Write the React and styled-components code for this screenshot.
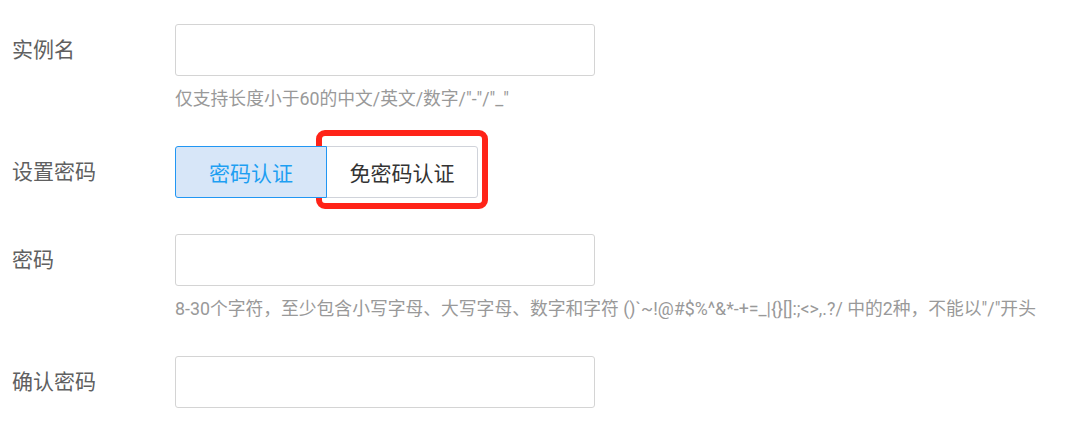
import React, { useState } from 'react'
import styled, { createGlobalStyle } from 'styled-components'

const GlobalStyle = createGlobalStyle`
  body {
    margin: 0;
    background: #fff;
    font-family: Roboto, 'Noto Sans CJK SC', sans-serif;
  }
`

const Form = styled.div`
  padding: 24px 0 0 12px;
  display: flex;
  flex-direction: column;
  gap: 36px;
`

const Item = styled.div`
  display: flex;
  align-items: flex-start;
`

const Label = styled.div`
  width: 163px;
  flex-shrink: 0;
  line-height: 52px;
  font-size: 21px;
  color: #606060;
`

const Control = styled.div`
  display: flex;
  flex-direction: column;
`

const Input = styled.input`
  box-sizing: border-box;
  width: 420px;
  height: 52px;
  border: 1px solid #d4d4d4;
  border-radius: 3px;
  outline: none;
  padding: 0 12px;
  font-size: 16px;
`

const Hint = styled.div`
  margin-top: 12px;
  line-height: 22px;
  font-size: 17.8px;
  color: #999;
  white-space: nowrap;
`

const Group = styled.div`
  display: flex;
`

const Choice = styled.button`
  position: relative;
  box-sizing: border-box;
  width: 152px;
  height: 52px;
  margin-left: ${p => (p.$first ? '0' : '-1px')};
  border: 1px solid ${p => (p.$active ? '#2196f3' : '#d0d3da')};
  border-radius: ${p => (p.$first ? '3px 0 0 3px' : '0 3px 3px 0')};
  background: ${p => (p.$active ? '#d7e6f8' : '#fff')};
  color: ${p => (p.$active ? '#1e9ff2' : '#333')};
  z-index: ${p => (p.$active ? 1 : 0)};
  font-family: inherit;
  font-size: 21px;
  cursor: pointer;
  padding: 0;
`

const Marker = styled.span`
  position: absolute;
  left: -11px;
  top: -17px;
  width: 172px;
  height: 79px;
  box-sizing: border-box;
  border: 6px solid #ff2318;
  border-radius: 9px;
  pointer-events: none;
`

export default function App() {
  const [mode, setMode] = useState('pwd')

  return (
    <>
      <GlobalStyle />
      <Form>
        <Item>
          <Label>实例名</Label>
          <Control>
            <Input />
            <Hint>仅支持长度小于60的中文/英文/数字/"-"/"_"</Hint>
          </Control>
        </Item>
        <Item>
          <Label>设置密码</Label>
          <Group>
            <Choice $first $active={mode === 'pwd'} onClick={() => setMode('pwd')}>
              密码认证
            </Choice>
            <Choice $active={mode === 'nopwd'} onClick={() => setMode('nopwd')}>
              免密码认证
              <Marker />
            </Choice>
          </Group>
        </Item>
        <Item>
          <Label>密码</Label>
          <Control>
            <Input type="password" />
            <Hint>8-30个字符，至少包含小写字母、大写字母、数字和字符 ()`~!@#$%^&*-+=_|{'{}'}[]:;&lt;&gt;,.?/ 中的2种，不能以"/"开头</Hint>
          </Control>
        </Item>
        <Item>
          <Label>确认密码</Label>
          <Control>
            <Input type="password" />
          </Control>
        </Item>
      </Form>
    </>
  )
}
